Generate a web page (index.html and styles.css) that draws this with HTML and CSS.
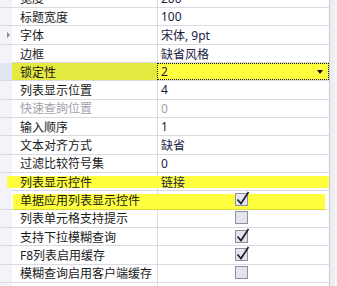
FILE: index.html
```html
<!DOCTYPE html>
<html lang="zh-CN">
<head>
    <meta charset="UTF-8">
    <title>属性</title>
    <link rel="stylesheet" href="styles.css">
</head>
<body>
    <div class="grid">
        <div class="sheet">
            <div class="row"><div class="gut"></div><div class="name"><span>宽度</span></div><div class="val"><span>200</span></div></div>
            <div class="row"><div class="gut"></div><div class="name"><span>标题宽度</span></div><div class="val"><span>100</span></div></div>
            <div class="row"><div class="gut"><i class="expand"></i></div><div class="name"><span>字体</span></div><div class="val"><span>宋体, 9pt</span></div></div>
            <div class="row"><div class="gut"></div><div class="name"><span>边框</span></div><div class="val"><span>缺省风格</span></div></div>
            <div class="row sel"><div class="gut"></div><div class="name"><span>锁定性</span></div><div class="val"><span>2</span><i class="drop"></i></div></div>
            <div class="row"><div class="gut"></div><div class="name"><span>列表显示位置</span></div><div class="val"><span>4</span></div></div>
            <div class="row off"><div class="gut"></div><div class="name"><span>快速查詢位置</span></div><div class="val"><span>0</span></div></div>
            <div class="row"><div class="gut"></div><div class="name"><span>输入顺序</span></div><div class="val"><span>1</span></div></div>
            <div class="row"><div class="gut"></div><div class="name"><span>文本对齐方式</span></div><div class="val"><span>缺省</span></div></div>
            <div class="row"><div class="gut"></div><div class="name"><span>过滤比较符号集</span></div><div class="val"><span>0</span></div></div>
            <div class="row mark-a"><div class="gut"></div><div class="name"><span>列表显示控件</span></div><div class="val"><span>链接</span></div></div>
            <div class="row mark-b"><div class="gut"></div><div class="name"><span>单据应用列表显示控件</span></div><div class="val chk"><svg class="box on" viewBox="0 0 15 16"><rect x="0.5" y="2.5" width="12" height="12"/><polyline points="2.5,8.5 6,12.5 13.5,1"/></svg></div></div>
            <div class="row"><div class="gut"></div><div class="name"><span>列表单元格支持提示</span></div><div class="val chk"><svg class="box" viewBox="0 0 15 16"><rect x="0.5" y="2.5" width="12" height="12"/></svg></div></div>
            <div class="row"><div class="gut"></div><div class="name"><span>支持下拉模糊查询</span></div><div class="val chk"><svg class="box on" viewBox="0 0 15 16"><rect x="0.5" y="2.5" width="12" height="12"/><polyline points="2.5,8.5 6,12.5 13.5,1"/></svg></div></div>
            <div class="row"><div class="gut"></div><div class="name"><span>F8列表启用缓存</span></div><div class="val chk"><svg class="box on" viewBox="0 0 15 16"><rect x="0.5" y="2.5" width="12" height="12"/><polyline points="2.5,8.5 6,12.5 13.5,1"/></svg></div></div>
            <div class="row"><div class="gut"></div><div class="name"><span>模糊查询启用客户端缓存</span></div><div class="val chk"><svg class="box" viewBox="0 0 15 16"><rect x="0.5" y="2.5" width="12" height="12"/></svg></div></div>
            <div class="row"><div class="gut"></div><div class="name"></div><div class="val"></div></div>
        </div>
        <div class="scroll"></div>
    </div>
</body>
</html>
```

FILE: styles.css
```css
* {
    margin: 0;
    padding: 0;
    box-sizing: border-box;
}

html, body {
    width: 100%;
    height: 100%;
    overflow: hidden;
    background: #fff;
}

body {
    font-family: "Noto Sans", "Noto Sans CJK SC", sans-serif;
    font-size: 12px;
    color: #1a1a1a;
}

.grid {
    display: flex;
    height: 100%;
}

.sheet {
    flex: 1;
    margin-top: -10.33px;
}

.scroll {
    width: 8px;
    border-left: 1px solid #c9c9d3;
    background: #eeeef2;
    box-shadow: inset -2px 0 0 #f8f8fa;
}

.row {
    position: relative;
    display: grid;
    grid-template-columns: 12px 146px 1fr;
    height: 18.33px;
    border-bottom: 1px solid #dadae2;
}

.gut {
    display: flex;
    align-items: center;
    padding-left: 7px;
    background: #f4f4f8;
}

.expand {
    width: 0;
    height: 0;
    border-left: 3px solid #8a8a8a;
    border-top: 3px solid transparent;
    border-bottom: 3px solid transparent;
}

.name {
    display: flex;
    align-items: center;
    padding-left: 8px;
    border-right: 1px solid #dadae2;
    white-space: nowrap;
    overflow: hidden;
}

.val {
    display: flex;
    align-items: center;
    padding-left: 3px;
    color: #1c1c44;
    white-space: nowrap;
}

.name span, .val span, .val svg {
    position: relative;
    z-index: 1;
}

.off .name, .off .val {
    color: #a2a2aa;
}

/* selected row */
.sel .gut {
    background: #dfe6f4;
}

.sel .name {
    background: #e4e93f;
}

.sel .val {
    justify-content: space-between;
    padding-right: 6px;
    background: #ffff40;
    outline: 1px dotted #111;
    outline-offset: -1px;
    margin-left: -1px;
    padding-left: 4px;
}

.drop {
    width: 0;
    height: 0;
    border-top: 4px solid #111;
    border-left: 3px solid transparent;
    border-right: 3px solid transparent;
}

/* marker highlights */
.mark-a::before, .mark-b::before {
    content: "";
    position: absolute;
    z-index: 0;
    background: #ffff40;
}

.mark-a::before {
    left: 7px;
    right: 0;
    top: 3px;
    bottom: 2px;
}

.mark-b::before {
    left: 13px;
    right: 4px;
    top: 3px;
    bottom: -1px;
    border-bottom: 1px solid #d9d936;
}

.chk {
    justify-content: center;
    padding-left: 0;
    padding-right: 2px;
}

.box {
    width: 15px;
    height: 16px;
    margin-top: -2px;
}

.box rect {
    fill: #e4e5ec;
    stroke: #8e909e;
}

.box polyline {
    fill: none;
    stroke: #20202e;
    stroke-width: 1.7;
}
```
